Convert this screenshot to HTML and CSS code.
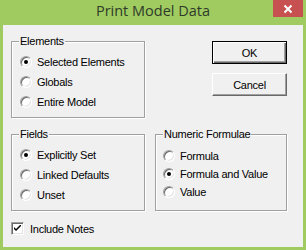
FILE: index.html
```html
<!DOCTYPE html>
<html lang="en">
<head>
    <meta charset="UTF-8">
    <title>Print Model Data</title>
    <link rel="stylesheet" href="styles.css">
</head>
<body>
    <div class="window">
        <div class="titlebar">
            <span class="title">Print Model Data</span>
            <a class="close" href="javascript:;">
                <svg width="10" height="10" viewBox="0 0 10 10">
                    <path d="M1.5 1.5 L8.5 8.5 M8.5 1.5 L1.5 8.5" stroke="#fff" stroke-width="2" fill="none"/>
                </svg>
            </a>
        </div>
        <div class="client">
            <div class="layout">
                <div class="group elements">
                    <span class="group-title">Elements</span>
                    <label class="option"><span class="radio checked"></span>Selected Elements</label>
                    <label class="option"><span class="radio"></span>Globals</label>
                    <label class="option"><span class="radio"></span>Entire Model</label>
                </div>
                <div class="buttons">
                    <a class="btn btn-default" href="javascript:;">OK</a>
                    <a class="btn" href="javascript:;">Cancel</a>
                </div>
                <div class="group fields">
                    <span class="group-title">Fields</span>
                    <label class="option"><span class="radio checked"></span>Explicitly Set</label>
                    <label class="option"><span class="radio"></span>Linked Defaults</label>
                    <label class="option"><span class="radio"></span>Unset</label>
                </div>
                <div class="group numeric">
                    <span class="group-title">Numeric Formulae</span>
                    <label class="option"><span class="radio"></span>Formula</label>
                    <label class="option"><span class="radio checked"></span>Formula and Value</label>
                    <label class="option"><span class="radio"></span>Value</label>
                </div>
            </div>
            <label class="check-row">
                <span class="checkbox">
                    <svg width="7" height="7" viewBox="0 0 7 7">
                        <path d="M0 2 L0 4 L2 6 L7 1 L7 -1 L2 4 Z" fill="#000"/>
                    </svg>
                </span>
                Include Notes
            </label>
        </div>
    </div>
</body>
</html>
```

FILE: styles.css
```css
html,
body{
    margin: 0;
    padding: 0;
}
body{
    width: 306px;
    height: 250px;
    overflow: hidden;
}
a{
    text-decoration: none;
    color: #000000;
}
.window{
    width: 306px;
    height: 250px;
    box-sizing: border-box;
    background-color: #9fcb61;
    padding: 0 3px 3px 3px;
    display: flex;
    flex-direction: column;
}
.titlebar{
    height: 25px;
    display: grid;
    grid-template-columns: 1fr auto 1fr;
}
.title{
    grid-column: 2;
    font-family: "Open Sans", "Noto Sans", sans-serif;
    font-size: 14.5px;
    line-height: 22px;
    color: #2f3a28;
}
.close{
    grid-column: 3;
    justify-self: end;
    align-self: start;
    width: 30px;
    height: 17px;
    background-color: #c75050;
    display: flex;
    align-items: center;
    justify-content: center;
}
.close svg{
    display: block;
}
.client{
    flex: 1;
    background-color: #f0f0f0;
    padding: 16px 0 0 8px;
    font-family: "Liberation Sans", Arial, sans-serif;
    font-size: 11px;
    letter-spacing: -0.25px;
    color: #000;
}
.layout{
    display: grid;
    grid-template-columns: 134px 132px;
    grid-template-rows: 77px 77px;
    column-gap: 10px;
    row-gap: 16px;
}
.group{
    position: relative;
    box-sizing: border-box;
    border: 1px solid #a0a0a0;
    box-shadow: 1px 1px 0 #fff, inset 1px 1px 0 #fff;
    padding: 10px 0 0 8px;
    display: flex;
    flex-direction: column;
}
.group-title{
    position: absolute;
    top: -7px;
    left: 7px;
    padding: 0 1px;
    line-height: 13px;
    background-color: #f0f0f0;
}
.option{
    height: 20px;
    display: flex;
    align-items: center;
    gap: 5px;
}
.numeric{
    padding: 12px 0 0 7px;
}
.numeric .option{
    height: 18px;
}
.radio{
    width: 12px;
    height: 12px;
    box-sizing: border-box;
    border: 1px solid;
    border-color: #a0a0a0 #fff #fff #a0a0a0;
    border-radius: 50%;
    background-color: #fff;
    box-shadow: inset 1px 1px 0 #696969, inset -1px -1px 0 #e3e3e3;
    display: grid;
    place-items: center;
    flex-shrink: 0;
}
.radio.checked::after{
    content: "";
    width: 4px;
    height: 4px;
    border-radius: 50%;
    background-color: #000;
}
.buttons{
    justify-self: end;
    display: flex;
    flex-direction: column;
    gap: 9px;
}
.btn{
    width: 75px;
    height: 23px;
    box-sizing: border-box;
    border: 1px solid;
    border-color: #fff #696969 #696969 #fff;
    box-shadow: inset -1px -1px 0 #a0a0a0;
    background-color: #f0f0f0;
    display: flex;
    align-items: center;
    justify-content: center;
}
.btn-default{
    border: 1px solid #000;
    box-shadow: inset 1px 1px 0 #fff, inset -1px -1px 0 #696969, inset -2px -2px 0 #a0a0a0;
}
.check-row{
    margin-top: 11px;
    display: flex;
    align-items: center;
    gap: 6px;
}
.checkbox{
    width: 13px;
    height: 13px;
    box-sizing: border-box;
    border: 1px solid;
    border-color: #a0a0a0 #fff #fff #a0a0a0;
    box-shadow: inset 1px 1px 0 #696969, inset -1px -1px 0 #e3e3e3;
    background-color: #fff;
    display: flex;
    align-items: center;
    justify-content: center;
}
.checkbox svg{
    display: block;
}
```
